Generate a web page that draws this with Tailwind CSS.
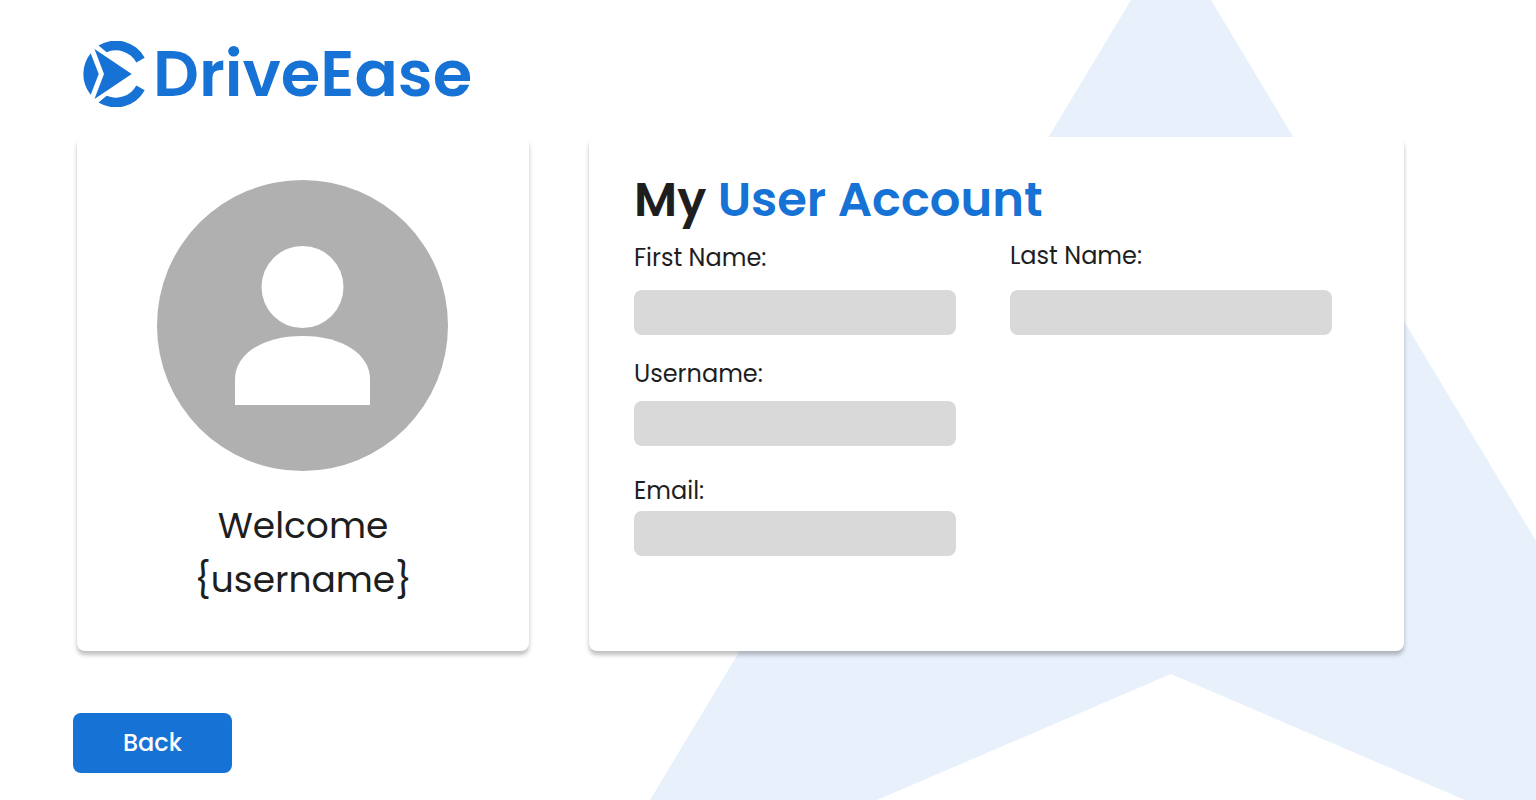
<!DOCTYPE html>
<html lang="en">
<head>
<meta charset="utf-8">
<meta name="viewport" content="width=device-width, initial-scale=1">
<title>DriveEase - My User Account</title>
<script src="https://cdn.jsdelivr.net/npm/@tailwindcss/browser@4"></script>
</head>
<body class="bg-white font-['Poppins','Inter',sans-serif] text-[#1e1e1e]">
<div class="relative isolate min-h-screen overflow-hidden pb-[27px]">
  <!-- Background star -->
  <svg class="absolute top-0 right-0 -z-10 h-[800px] w-[886px]" viewBox="650 0 886 800" aria-hidden="true">
    <path fill="#e8f0fc" d="M1131 0H1211L1536 541V800H1465L1171 674L877 800H650Z"/>
  </svg>

  <header class="flex h-[137px] items-center pt-[11px] pl-[83px]">
    <a href="#" class="flex items-center gap-1 text-[#1672d4]">
      <svg class="size-[66px]" viewBox="0 0 66 66" fill="currentColor" aria-hidden="true">
        <path d="M15.500 4.500A33 33 0 0 1 61.700 16.700L53.300 21.500A23.300 23.300 0 0 0 23.700 11.200Z"/>
        <path d="M15.500 61.500A33 33 0 0 0 61.700 49.300L53.300 44.500A23.300 23.300 0 0 1 23.700 54.800Z"/>
        <path d="M7.700 12.200A33 33 0 0 0 7.700 53.800L15.700 33Z"/>
        <path d="M11.500 8L48.700 33L11.500 58L21 33Z"/>
      </svg>
      <span class="text-[64px] leading-[66px] font-semibold">DriveEase</span>
    </a>
  </header>

  <main class="grid grid-cols-[452fr_815fr] gap-[60px] pr-[132px] pl-[77px]">
    <section class="flex flex-col items-center rounded-lg bg-white px-6 pt-[42px] pb-[44px] shadow-[0_4px_4px_rgba(0,0,0,0.25)]">
      <svg class="size-[292px]" viewBox="0 0 292 292" role="img" aria-label="Profile picture">
        <circle cx="145.500" cy="146.500" r="145.500" fill="#b0b0b0"/>
        <circle cx="145.500" cy="108" r="41" fill="#fff"/>
        <path fill="#fff" d="M78 226V200C78 176 104.500 157 145.500 157S213 176 213 200V226Z"/>
      </svg>
      <p class="mt-[28px] text-center text-[36px] leading-[54px]">Welcome<br>{username}</p>
    </section>

    <section class="rounded-lg bg-white pt-[27px] pr-[72px] pb-[95px] pl-[45px] shadow-[0_4px_4px_rgba(0,0,0,0.25)]">
      <h1 class="text-[48px] leading-[72px] font-semibold">My <span class="text-[#1672d4]">User Account</span></h1>
      <form id="account" class="mt-[2px] grid grid-cols-2 items-end gap-x-[54px] text-[24px] leading-[36px]">
        <div class="flex flex-col gap-[14px]">
          <label for="first-name">First Name:</label>
          <input id="first-name" type="text" class="h-[45px] w-full rounded-lg bg-[#d9d9d9] px-3">
        </div>
        <div class="flex flex-col gap-[16px]">
          <label for="last-name">Last Name:</label>
          <input id="last-name" type="text" class="h-[45px] w-full rounded-lg bg-[#d9d9d9] px-3">
        </div>
        <div class="col-start-1 mt-[21px] flex flex-col gap-[9px]">
          <label for="username">Username:</label>
          <input id="username" type="text" class="h-[45px] w-full rounded-lg bg-[#d9d9d9] px-3">
        </div>
        <div class="col-start-1 mt-[27px] flex flex-col gap-[2px]">
          <label for="email">Email:</label>
          <input id="email" type="email" class="h-[45px] w-full rounded-lg bg-[#d9d9d9] px-3">
        </div>
      </form>
    </section>
  </main>

  <footer class="mt-[62px] pl-[73px]">
    <button type="button" class="h-[60px] w-[159px] rounded-lg bg-[#1672d4] text-[24px] leading-[36px] font-medium text-white">Back</button>
  </footer>
</div>
</body>
</html>
